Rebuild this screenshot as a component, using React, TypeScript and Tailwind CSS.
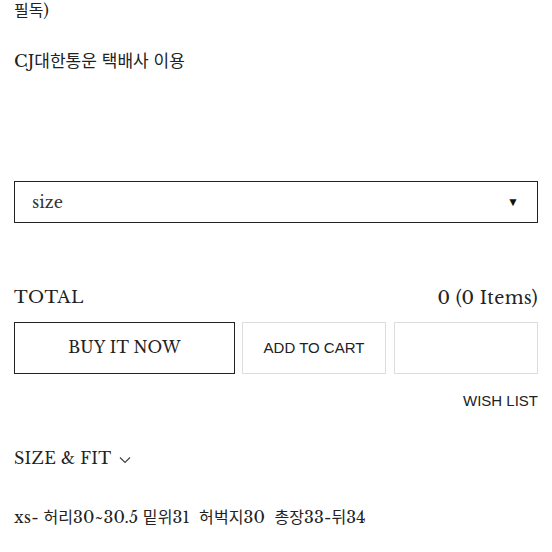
export default function App() {
  const serif = 'font-["Libre_Baskerville","Liberation_Serif","Noto_Sans_CJK_KR",serif]';
  const sans = 'font-["Liberation_Sans","Noto_Sans_CJK_KR",sans-serif]';
  return (
    <div className="w-[552px] h-[552px] overflow-hidden bg-white text-[#222]">
      <div className="px-[14px]">
        {/* delivery notes */}
        <p className={`${serif} text-[16px] leading-[24px] -mt-[2px]`}>필독)</p>
        <p className={`${serif} text-[17px] leading-[24px] mt-[28px]`}>CJ대한통운 택배사 이용</p>

        {/* option select */}
        <div className="mt-[107px] h-[42px] border border-[#222] flex items-center justify-between pl-[17px] pr-[18px]">
          <span className={`${serif} text-[16px] text-[#333]`}>size</span>
          <span className="text-[12px] text-[#111]">▼</span>
        </div>

        {/* total */}
        <div className={`${serif} mt-[63px] flex justify-between items-center text-[17px] leading-[24px]`}>
          <span className="tracking-[0.5px]">TOTAL</span>
          <span className="text-[17.5px] tracking-[0.4px]">0 (0 Items)</span>
        </div>

        {/* actions */}
        <div className="mt-[12px] flex gap-[7px] h-[52px]">
          <button className={`${serif} w-[221px] border border-[#222] text-[15.5px] tracking-[0.3px]`}>BUY IT NOW</button>
          <button className={`${sans} w-[144px] border border-[#ddd] text-[15px]`}>ADD TO CART</button>
          <button className="flex-1 border border-[#ddd] ml-[1px]"></button>
        </div>

        <div className={`${sans} mt-[17px] text-right text-[15px] leading-[20px]`}>WISH LIST</div>

        {/* size & fit */}
        <div className={`${serif} mt-[35px] flex items-center gap-[8px] text-[16px] leading-[24px]`}>
          <span className="tracking-[0.3px]">SIZE &amp; FIT</span>
          <svg width="12" height="8" viewBox="0 0 12 8" fill="none" stroke="#444" strokeWidth="1.2" className="mt-[3px]">
            <path d="M1 1.5 6 6.5 11 1.5" />
          </svg>
        </div>

        <p className={`${serif} mt-[35px] text-[16px] leading-[24px] whitespace-pre tracking-[0.1px]`}>xs- 허리30~30.5 밑위31  허벅지30  총장33-뒤34</p>
      </div>
    </div>
  );
}
